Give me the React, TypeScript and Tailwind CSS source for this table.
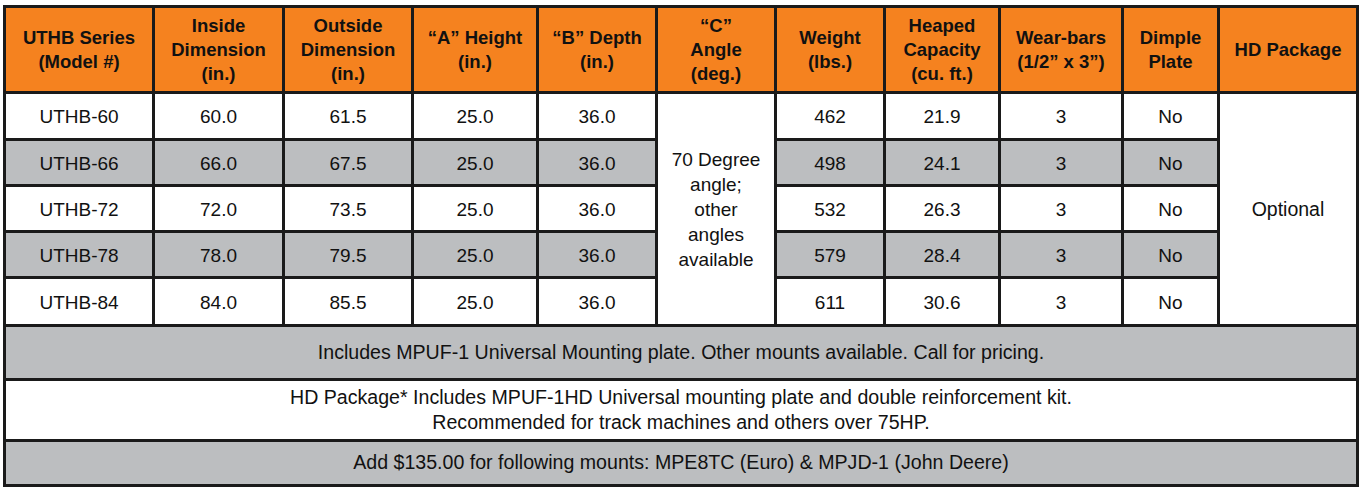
const headers = [
  ["UTHB Series", "(Model #)"],
  ["Inside", "Dimension", "(in.)"],
  ["Outside", "Dimension", "(in.)"],
  ["\u201cA\u201d Height", "(in.)"],
  ["\u201cB\u201d Depth", "(in.)"],
  ["\u201cC\u201d", "Angle", "(deg.)"],
  ["Weight", "(lbs.)"],
  ["Heaped", "Capacity", "(cu. ft.)"],
  ["Wear-bars", "(1/2\u201d x 3\u201d)"],
  ["Dimple", "Plate"],
  ["HD Package"],
];

const rows = [
  { model: "UTHB-60", inside: "60.0", outside: "61.5", weight: "462", cap: "21.9" },
  { model: "UTHB-66", inside: "66.0", outside: "67.5", weight: "498", cap: "24.1" },
  { model: "UTHB-72", inside: "72.0", outside: "73.5", weight: "532", cap: "26.3" },
  { model: "UTHB-78", inside: "78.0", outside: "79.5", weight: "579", cap: "28.4" },
  { model: "UTHB-84", inside: "84.0", outside: "85.5", weight: "611", cap: "30.6" },
];

const cell = "flex items-center justify-center text-center";

export default function App() {
  return (
    <div
      className="w-[1363px] h-[492px] bg-white pl-[3px] pt-[5px] text-[#111111]"
      style={{ fontFamily: '"Liberation Sans", Arial, sans-serif' }}
    >
      <div className="inline-grid grid-cols-[146px_127px_126px_122px_116px_116px_106px_112px_120px_93px_136px] grid-rows-[83px_44px_43px_43px_43px_45px_51px_58px_42px] gap-[3px] p-[3px] bg-[#1a1a1a]">
        {headers.map((lines, i) => (
          <div
            key={i}
            className={`${cell} flex-col bg-[#f5821f] font-bold text-[18.5px] leading-[24px]`}
          >
            {lines.map((l) => (
              <span key={l}>{l}</span>
            ))}
          </div>
        ))}

        {rows.map((r, i) => {
          const bg = i % 2 === 1 ? "bg-[#bcbec0]" : "bg-white";
          const base = `${cell} ${bg} pt-[3px] text-[19px]`;
          return [
            <div key={`${i}-m`} className={base}>{r.model}</div>,
            <div key={`${i}-i`} className={base}>{r.inside}</div>,
            <div key={`${i}-o`} className={base}>{r.outside}</div>,
            <div key={`${i}-a`} className={base}>25.0</div>,
            <div key={`${i}-b`} className={base}>36.0</div>,
            i === 0 && (
              <div
                key="angle"
                className={`${cell} row-span-5 flex-col bg-white text-[19px] leading-[25px]`}
              >
                <span>70 Degree</span>
                <span>angle;</span>
                <span>other</span>
                <span>angles</span>
                <span>available</span>
              </div>
            ),
            <div key={`${i}-w`} className={base}>{r.weight}</div>,
            <div key={`${i}-c`} className={base}>{r.cap}</div>,
            <div key={`${i}-wb`} className={base}>3</div>,
            <div key={`${i}-d`} className={base}>No</div>,
            i === 0 && (
              <div key="hd" className={`${cell} row-span-5 bg-white pt-[2px] text-[19.5px]`}>
                Optional
              </div>
            ),
          ];
        })}

        <div className={`${cell} col-span-11 bg-[#bcbec0] text-[19.6px]`}>
          Includes MPUF-1 Universal Mounting plate. Other mounts available. Call for pricing.
        </div>
        <div className={`${cell} col-span-11 flex-col bg-white text-[19.6px] leading-[25px]`}>
          <span>HD Package* Includes MPUF-1HD Universal mounting plate and double reinforcement kit.</span>
          <span>Recommended for track machines and others over 75HP.</span>
        </div>
        <div className={`${cell} col-span-11 bg-[#bcbec0] text-[19.6px]`}>
          Add $135.00 for following mounts: MPE8TC (Euro) &amp; MPJD-1 (John Deere)
        </div>
      </div>
    </div>
  );
}
